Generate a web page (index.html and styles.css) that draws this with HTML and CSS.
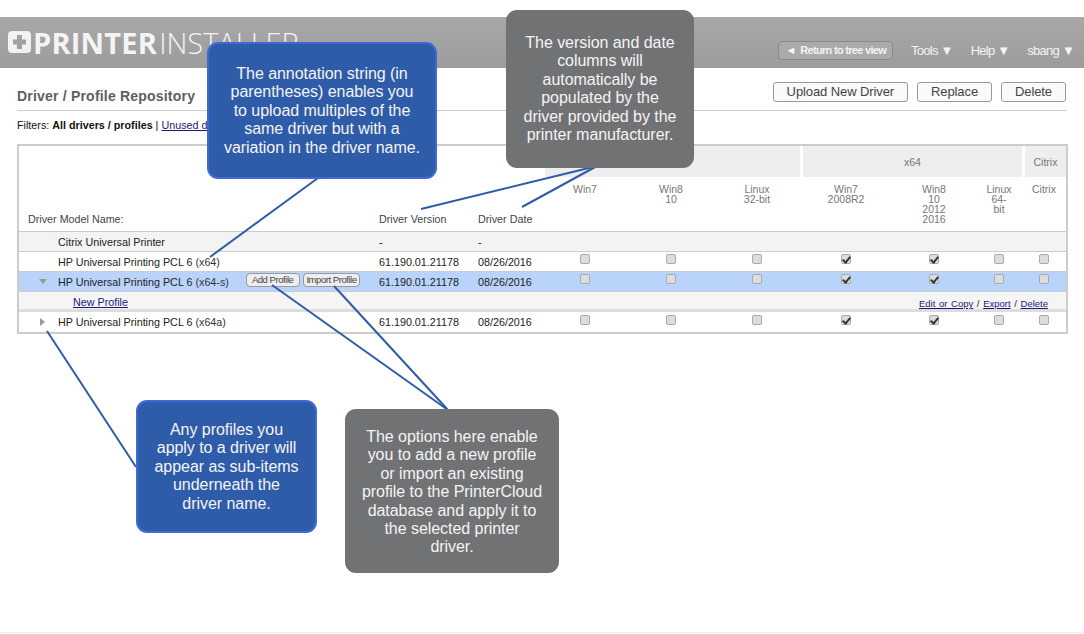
FILE: index.html
```html
<!DOCTYPE html>
<html>
  <head>
    <title>Printer Installer</title>
    <link rel="stylesheet" href="styles.css">
  </head>
  <body>
    <div id="top">
      <div id="logo">
        <svg width="23" height="22" viewBox="0 0 23 22">
          <path fill="#f2f2f2" fill-rule="evenodd" d="M4 0h15a4 4 0 0 1 4 4v14a4 4 0 0 1-4 4H4a4 4 0 0 1-4-4V4a4 4 0 0 1 4-4zM9 4v4.500H5v5h4V18h5v-4.500h4v-5h-4V4z"/>
        </svg>
        <b>PRINTER</b><span>INSTALLER</span>
      </div>
      <div id="nav">
        <a class="back">&#9668;&nbsp; Return to tree view</a>
        <a>Tools &#9660;</a>
        <a>Help &#9660;</a>
        <a>sbang &#9660;</a>
      </div>
    </div>

    <div id="main">
      <div id="heading">
        <h1>Driver / Profile Repository</h1>
        <button>Upload New Driver</button>
        <button>Replace</button>
        <button>Delete</button>
      </div>
      <div id="filters">Filters: <b>All drivers / profiles</b> | <a>Unused drivers</a></div>

      <table id="drivers">
        <colgroup>
          <col class="c-arrow"><col class="c-name"><col class="c-ver"><col class="c-date">
          <col class="c-a"><col class="c-b"><col class="c-c"><col class="c-d"><col class="c-e"><col class="c-f"><col class="c-g">
        </colgroup>
        <tr class="groups">
          <td colspan="4"></td>
          <th colspan="3">x86</th>
          <th colspan="3">x64</th>
          <th>Citrix</th>
        </tr>
        <tr class="heads">
          <td colspan="2" class="bottom first">Driver Model Name:</td>
          <td class="bottom">Driver Version</td>
          <td class="bottom">Driver Date</td>
          <td class="os">Win7</td>
          <td class="os">Win8<br>10</td>
          <td class="os">Linux<br>32-bit</td>
          <td class="os">Win7<br>2008R2</td>
          <td class="os">Win8<br>10<br>2012<br>2016</td>
          <td class="os">Linux<br>64-<br>bit</td>
          <td class="os">Citrix</td>
        </tr>
        <tr class="row citrix">
          <td></td>
          <td>Citrix Universal Printer</td>
          <td>-</td>
          <td>-</td>
          <td colspan="7"></td>
        </tr>
        <tr class="row">
          <td></td>
          <td>HP Universal Printing PCL 6 <i>(x64)</i></td>
          <td>61.190.01.21178</td>
          <td>08/26/2016</td>
          <td><input type="checkbox"></td>
          <td><input type="checkbox"></td>
          <td><input type="checkbox"></td>
          <td><input type="checkbox" checked></td>
          <td><input type="checkbox" checked></td>
          <td><input type="checkbox"></td>
          <td><input type="checkbox"></td>
        </tr>
        <tr class="row selected">
          <td><span class="arrow-down"></span></td>
          <td>
            <div class="name-cell">
              <span>HP Universal Printing PCL 6 <i>(x64-s)</i></span>
              <span class="pills"><a>Add Profile</a><a>Import Profile</a></span>
            </div>
          </td>
          <td>61.190.01.21178</td>
          <td>08/26/2016</td>
          <td><input type="checkbox"></td>
          <td><input type="checkbox"></td>
          <td><input type="checkbox"></td>
          <td><input type="checkbox" checked></td>
          <td><input type="checkbox" checked></td>
          <td><input type="checkbox"></td>
          <td><input type="checkbox"></td>
        </tr>
        <tr class="sub">
          <td></td>
          <td colspan="3" class="new-cell"><a class="new">New Profile</a></td>
          <td colspan="7" class="actions"><a>Edit or Copy</a> / <a>Export</a> / <a>Delete</a></td>
        </tr>
        <tr class="row">
          <td><span class="arrow-right"></span></td>
          <td>HP Universal Printing PCL 6 <i>(x64a)</i></td>
          <td>61.190.01.21178</td>
          <td>08/26/2016</td>
          <td><input type="checkbox"></td>
          <td><input type="checkbox"></td>
          <td><input type="checkbox"></td>
          <td><input type="checkbox" checked></td>
          <td><input type="checkbox" checked></td>
          <td><input type="checkbox"></td>
          <td><input type="checkbox"></td>
        </tr>
      </table>
    </div>

    <!-- annotations on top of the page -->
    <svg id="lines" width="1084" height="634">
      <path d="M318 178 L210 257"/>
      <path d="M597 166 L421 209"/>
      <path d="M597 166 L522 207"/>
      <path d="M47 331 L136 467"/>
      <path d="M272 285 L448 410"/>
      <path d="M334 286 L448 410"/>
    </svg>
    <div class="note blue n1">The annotation string (in<br>parentheses) enables you<br>to upload multiples of the<br>same driver but with a<br>variation in the driver name.</div>
    <div class="note grey n2">The version and date<br>columns will<br>automatically be<br>populated by the<br>driver provided by the<br>printer manufacturer.</div>
    <div class="note blue n3">Any profiles you<br>apply to a driver will<br>appear as sub-items<br>underneath the<br>driver name.</div>
    <div class="note grey n4">The options here enable<br>you to add a new profile<br>or import an existing<br>profile to the PrinterCloud<br>database and apply it to<br>the selected printer<br>driver.</div>

    <div id="foot"></div>
  </body>
</html>
```

FILE: styles.css
```css
* { box-sizing: border-box; }
html, body { margin: 0; padding: 0; }
body {
  height: 634px;
  overflow: hidden;
  background: white;
  font-family: "Liberation Sans", Arial, sans-serif;
  font-size: 10.750px;
  color: #222;
}

a { color: #1a1a7a; text-decoration: underline; }

#top {
  height: 51px;
  margin-top: 17px;
  padding: 0 10px 0 8px;
  background: linear-gradient(#a8a8a8, #9c9c9c);
  display: flex;
  justify-content: space-between;
  color: #f4f4f4;
}

#logo {
  display: flex;
  align-items: center;
  gap: 2px;
  font-family: "Open Sans", sans-serif;
  font-size: 29px;
  line-height: 51px;
  height: 51px;
  padding-bottom: 1px;
}
#logo b { font-weight: 700; letter-spacing: 0.2px; }
#logo span { font-weight: 300; }

#nav {
  display: flex;
  align-items: center;
  gap: 18px;
  padding-top: 15px;
  font-size: 13px;
  letter-spacing: -0.750px;
}
#nav a { color: #f4f4f4; text-decoration: none; }
#nav .back {
  height: 19px;
  padding: 0 6px;
  border: 1px solid #8a8a8a;
  border-radius: 4px;
  background: #aaa;
  font-size: 11px;
  font-weight: bold;
  letter-spacing: -0.700px;
  line-height: 17px;
}

#main { padding: 14px 18px 0 17px; }

#heading {
  height: 29px;
  display: flex;
  align-items: flex-start;
  gap: 9px;
  border-bottom: 1px solid #ccc;
}
#heading h1 {
  flex: 1;
  margin: 6px 0 0;
  font-size: 14px;
  color: #5a6068;
  letter-spacing: 0.2px;
}
#heading button {
  height: 20px;
  padding: 0 13px 2px;
  border: 1px solid #999;
  border-radius: 3px;
  background: #fafafa;
  font: 13px "Liberation Sans", Arial, sans-serif;
  letter-spacing: -0.1px;
  color: #444;
}

#filters { margin-top: 8px; height: 25px; color: #111; }

#drivers {
  width: 1051px;
  table-layout: fixed;
  border-collapse: separate;
  border-spacing: 0;
  border: 2px solid #ccc;
}
.c-arrow { width: 39px; }
.c-name { width: 321px; }
.c-ver { width: 99px; }
.c-date { width: 64px; }
.c-a { width: 86px; }
.c-b { width: 86px; }
.c-c { width: 86px; }
.c-d { width: 92px; }
.c-e { width: 84px; }
.c-f { width: 46px; }
.c-g { width: 44px; }

#drivers td { padding: 0; vertical-align: middle; }

.groups th {
  height: 31px;
  background: #eee;
  border-left: 3px solid white;
  font-weight: normal;
  font-size: 10.500px;
  color: #777;
}

.heads td { height: 55px; border-bottom: 1px solid #ccc; }
#drivers .heads .bottom {
  vertical-align: bottom;
  padding-bottom: 6px;
  color: #444;
}
#drivers .heads .first { padding-left: 9px; }
#drivers .heads .os {
  vertical-align: top;
  padding-top: 7px;
  text-align: center;
  font-size: 10.500px;
  line-height: 10px;
  color: #777;
}

.row td { height: 20px; border-bottom: 1px solid #ccc; white-space: nowrap; }
.row td:nth-child(n+5) { text-align: center; }
.row i { font-style: normal; color: #333; }
.citrix td { background: #f3f3f3; }
.selected td { background: #b9d3fb; }
#drivers tr:last-child td { border-bottom: none; height: 20px; }

.name-cell { display: flex; align-items: center; gap: 17px; }
.pills { display: flex; gap: 3px; margin-top: -3px; }
.pills a {
  height: 14px;
  padding: 0 6px 0 5px;
  border: 1px solid #999;
  border-radius: 4px;
  background: #eee;
  font-size: 9.500px;
  letter-spacing: -0.450px;
  line-height: 12px;
  color: #444;
  text-decoration: none;
}
.pills a + a { padding: 0 2px; }

.sub td { height: 20px; background: #f5f5f5; border-bottom: 3px solid #ddd; }
#drivers .new-cell { padding-top: 2px; }
.new { margin-left: 15px; }
#drivers .actions {
  padding-right: 18px;
  padding-top: 6px;
  text-align: right;
  font-size: 9.500px;
  word-spacing: 1px;
}

.row input {
  appearance: none;
  display: inline-block;
  position: relative;
  width: 10px;
  height: 10px;
  margin: 0 0 5px;
  border: 1px solid #aaa;
  border-radius: 2px;
  background: #ddd;
  vertical-align: middle;
}
.row input:checked::after {
  content: "";
  position: absolute;
  left: 2px;
  top: 0;
  width: 3px;
  height: 6px;
  border: solid #333;
  border-width: 0 2px 2px 0;
  transform: rotate(40deg);
}

.arrow-down, .arrow-right { display: block; width: 0; height: 0; }
.arrow-down {
  border: 4px solid transparent;
  border-top: 5px solid #999;
  border-bottom: none;
  margin-left: 20px;
}
.arrow-right {
  border: 4px solid transparent;
  border-left: 5px solid #999;
  border-right: none;
  margin-left: 21px;
}

#lines { position: absolute; left: 0; top: 0; }
#lines path { stroke: #2f5ca8; stroke-width: 2; fill: none; }

.note {
  position: absolute;
  text-align: center;
  white-space: nowrap;
  font-size: 16px;
  letter-spacing: -0.050px;
  line-height: 18.400px;
  color: #f4f4f4;
  border-radius: 11px;
}
.blue { background: #2f5ca8; border: 2px solid #3f69d6; }
.grey { background: #717274; }
.n1 { left: 207px; top: 42px; width: 230px; height: 137px; padding-top: 21px; }
.n2 { left: 506px; top: 10px; width: 188px; height: 158px; padding-top: 24px; }
.n3 { left: 136px; top: 400px; width: 181px; height: 133px; padding-top: 19px; }
.n4 { left: 345px; top: 409px; width: 214px; height: 164px; padding-top: 19px; }

#foot { position: absolute; left: 0; right: 0; top: 632px; border-top: 1px solid #eee; }
```
